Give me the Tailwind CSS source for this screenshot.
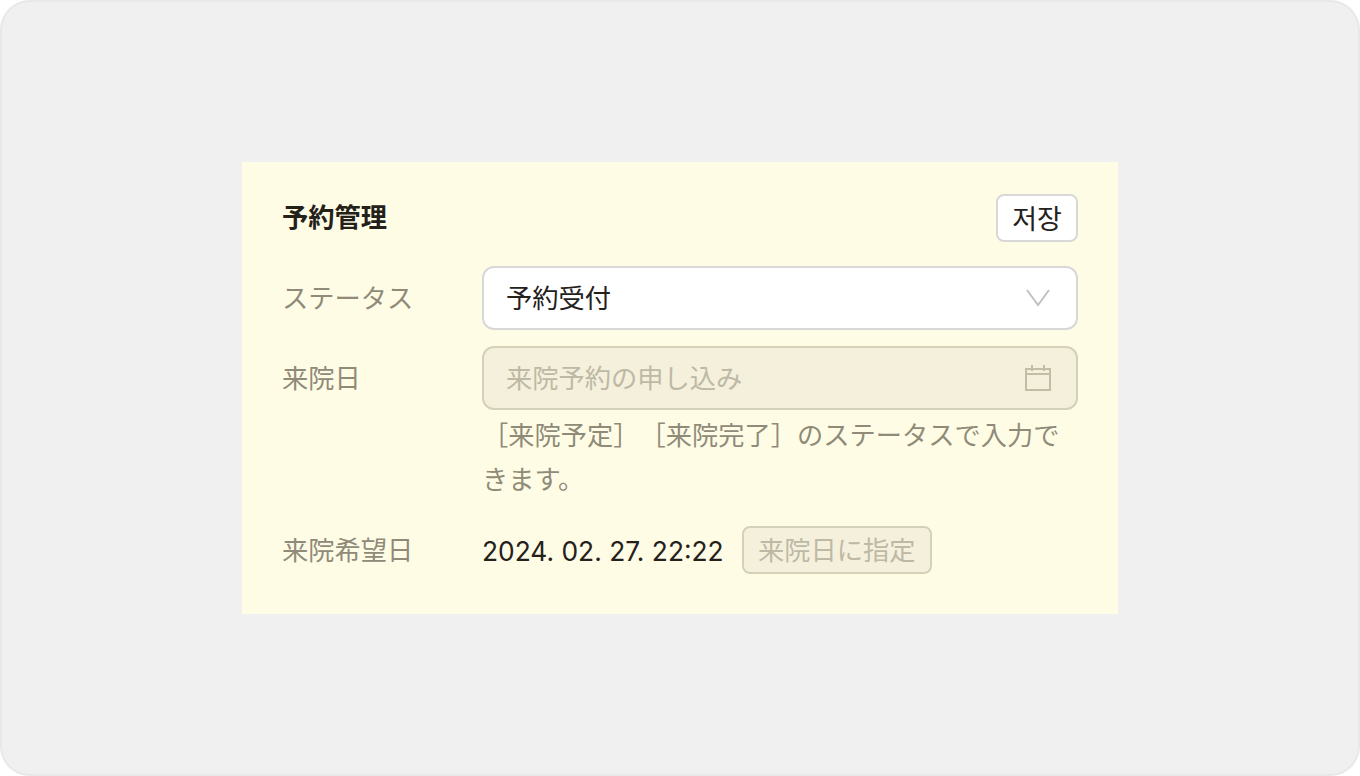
<!DOCTYPE html>
<html lang="ja">
<head>
  <meta charset="UTF-8">
  <meta name="viewport" content="width=device-width, initial-scale=1.0">
  <title>予約管理</title>
  <script src="https://cdn.jsdelivr.net/npm/@tailwindcss/browser@4"></script>
</head>
<body class="bg-white font-['Inter','Noto_Sans_CJK_JP',sans-serif]">
  <div class="w-[1360px] h-[776px] bg-[#f0f0f0] border-2 border-[#e8e8e8] rounded-[30px] flex items-center justify-center">
    <div class="w-[876px] h-[452px] bg-[#fffce6] pt-8 px-10 pb-10 flex flex-col">
      <div class="flex items-center justify-between h-12 mb-6">
        <h1 class="text-[26.25px] font-bold text-[#24211a] leading-[40px]">予約管理</h1>
        <button class="w-[82px] h-12 pb-[2px] bg-white border-2 border-[#d8d8d8] rounded-lg text-[27px] leading-none text-[#24211a] font-['Noto_Sans_CJK_KR',sans-serif]">저장</button>
      </div>

      <div class="flex items-center mb-4">
        <span class="w-[200px] pt-[2px] text-[26.25px] leading-[40px] text-[#8f8b78]">ステータス</span>
        <div class="flex-1 h-16 bg-white border-2 border-[#d8d8d8] rounded-xl flex items-center justify-between pl-[22px] pr-[26px]">
          <span class="pt-[2px] text-[26.25px] leading-[40px] text-[#24211a]">予約受付</span>
          <svg class="w-6 h-6" viewBox="0 0 24 24" fill="none" stroke="#c2c2bd" stroke-width="2"><path d="M1 4l11 15L23 4"/></svg>
        </div>
      </div>

      <div class="flex items-center">
        <span class="w-[200px] pt-[2px] text-[26.25px] leading-[40px] text-[#8f8b78]">来院日</span>
        <div class="flex-1 h-16 bg-[#f5f0dc] border-2 border-[#d5d1b9] rounded-xl flex items-center justify-between pl-[22px] pr-[25px]">
          <span class="pt-[2px] text-[26.25px] leading-[40px] text-[#bdb9a5]">来院予約の申し込み</span>
          <svg class="w-[26px] h-[26px]" viewBox="0 0 26 26" fill="none" stroke="#c2bea6" stroke-width="2"><path d="M1 4h24v21H1zM1 9h24M7 0v6M19 0v6"/></svg>
        </div>
      </div>

      <p class="ml-[200px] mt-1 text-[26.25px] leading-[44px] text-[#8f8b78] [text-spacing-trim:space-all]">［来院予定］［来院完了］のステータスで入力できます。</p>

      <div class="flex items-center mt-auto">
        <span class="w-[200px] pt-[2px] text-[26.25px] leading-[40px] text-[#8f8b78]">来院希望日</span>
        <span class="pt-[2px] text-[26.35px] leading-[40px] text-[#24211a]">2024. 02. 27. 22:22</span>
        <button class="ml-[18px] h-12 w-[190px] pt-[1px] bg-[#f5f0dc] border-2 border-[#d5d1b9] rounded-lg text-[26.25px] leading-[40px] text-[#bdb9a5]">来院日に指定</button>
      </div>
    </div>
  </div>
</body>
</html>
